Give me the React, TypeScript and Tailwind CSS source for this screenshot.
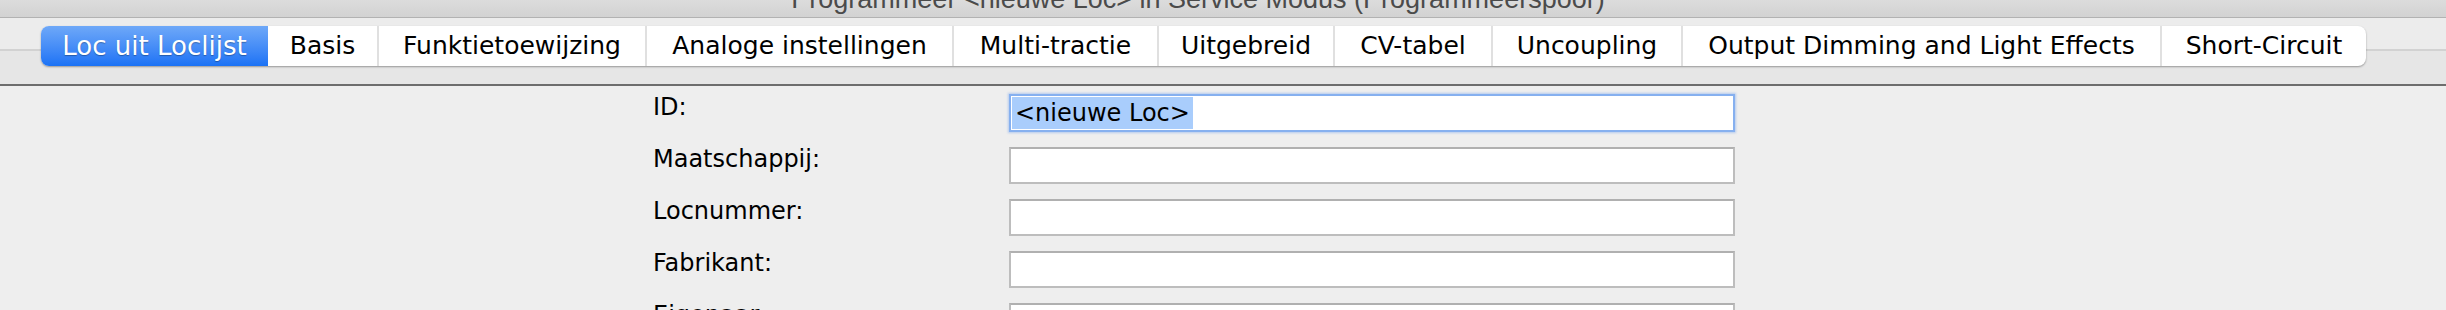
import React from 'react';

const tabs = [
  { label: 'Loc uit Loclijst', w: 'w-[227px]' },
  { label: 'Basis', w: 'w-[109px]' },
  { label: 'Funktietoewijzing', w: 'w-[268px]' },
  { label: 'Analoge instellingen', w: 'w-[307px]' },
  { label: 'Multi-tractie', w: 'w-[205px]' },
  { label: 'Uitgebreid', w: 'w-[176px]' },
  { label: 'CV-tabel', w: 'w-[158px]' },
  { label: 'Uncoupling', w: 'w-[190px]' },
  { label: 'Output Dimming and Light Effects', w: 'w-[479px]' },
  { label: 'Short-Circuit', w: 'w-[206px]' },
];

const fields = ['ID:', 'Maatschappij:', 'Locnummer:', 'Fabrikant:', 'Eigenaar:'];

export default function App() {
  return (
    <div className="w-[2446px] h-[310px] overflow-hidden bg-[#eeeeee] font-['DejaVu_Sans',sans-serif] text-black">
      {/* Title bar, cut off at the top */}
      <div className="h-[18px] overflow-hidden border-b border-[#b2b2b2] bg-gradient-to-b from-[#dcdcdc] to-[#d2d2d2] flex justify-center pr-[50px]">
        <span className="-mt-[14px] text-[27px] leading-[27px] text-[#4b4b4b] font-['Liberation_Sans',sans-serif] whitespace-nowrap">
          Programmeer &lt;nieuwe Loc&gt; in Service Modus (Programmeerspoor)
        </span>
      </div>

      {/* Tab header */}
      <div className="h-[66px] pt-[8px] pl-[41px] bg-[linear-gradient(#ececec_0,#ececec_31px,#d2d2d2_31px,#d2d2d2_33px,#e6e6e6_33px)]">
        <div className="flex h-[40px] w-fit rounded-[8px] bg-white shadow-[0_1px_2px_rgba(0,0,0,0.35)]">
          {tabs.map((t, i) =>
            i === 0 ? (
              <div
                key={t.label}
                className={`${t.w} flex items-center justify-center rounded-l-[8px] bg-gradient-to-b from-[#6ea8f8] to-[#1a72f5] text-white text-[26px] whitespace-nowrap [text-shadow:0_1px_1px_rgba(0,0,0,0.3)]`}
              >
                {t.label}
              </div>
            ) : (
              <div
                key={t.label}
                className={`${t.w} flex items-center justify-center text-[25px] whitespace-nowrap ${i > 1 ? 'border-l-2 border-[#e0e0e0]' : ''} ${i === tabs.length - 1 ? 'rounded-r-[8px]' : ''}`}
              >
                {t.label}
              </div>
            )
          )}
        </div>
      </div>

      {/* Panel top edge */}
      <div className="h-[2px] bg-[#6d6d6d]" />

      {/* Form */}
      <div className="pt-[9px] pl-[653px] flex flex-col gap-[15px]">
        {fields.map((f, i) => (
          <div key={f} className="flex items-start h-[37px]">
            <div className="w-[356px] text-[24px] leading-[22px] pt-[1px] whitespace-nowrap">{f}</div>
            {i === 0 ? (
              <div className="w-[726px] h-[38px] -mt-[1px] bg-white border-2 border-[#86b0ef] shadow-[0_0_2px_1px_rgba(110,160,240,0.45)] flex items-center pl-[1px]">
                <span className="bg-[#a9cdfc] text-[24px] leading-[32px] px-[3px]">&lt;nieuwe Loc&gt;</span>
              </div>
            ) : (
              <div className="w-[726px] h-[37px] bg-white border-2 border-[#bdbdbd] border-t-[#b0b0b0]" />
            )}
          </div>
        ))}
      </div>
    </div>
  );
}
